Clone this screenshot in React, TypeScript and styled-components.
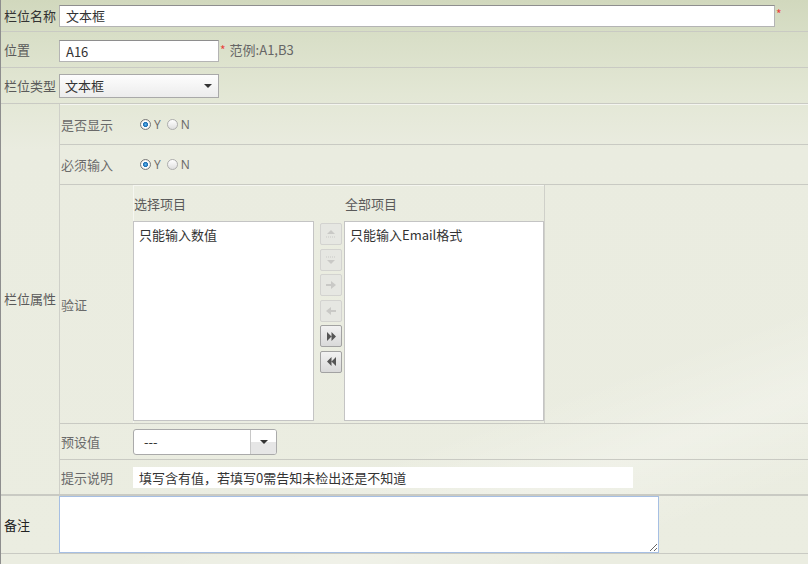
import React from 'react';
import styled, { createGlobalStyle } from 'styled-components';

const GlobalStyle = createGlobalStyle`
  html, body { margin: 0; padding: 0; }
  body {
    width: 808px;
    height: 564px;
    overflow: hidden;
    font-family: "Noto Sans CJK SC", "Open Sans", sans-serif;
    font-size: 13px;
    color: #444;
    background:
      linear-gradient(160deg, transparent 70%, rgba(255,255,255,0.25) 80%, transparent 90%),
      linear-gradient(180deg, #d1d8bd 0px, #d9dfc8 40px, #e3e7d5 95px, #eaece0 150px, #ebede1 100%);
  }
`;

const Form = styled.div`
  width: 808px;
  border-left: 1px solid #8e8e8e;
  box-sizing: border-box;
`;

const Row = styled.div<{ $h: number; $thick?: boolean }>`
  display: grid;
  grid-template-columns: 58px 1fr;
  min-height: ${(p) => p.$h}px;
  border-bottom: ${(p) => (p.$thick ? '2px' : '1px')} solid #c9cac3;
`;

const Label = styled.div<{ $tone?: string }>`
  display: flex;
  align-items: center;
  padding-left: 3px;
  color: ${(p) => p.$tone || '#5a5a5a'};
  white-space: nowrap;
  line-height: 16px;
`;

const Cell = styled.div`
  display: flex;
  align-items: center;
`;

const TextInput = styled.div<{ $w: number }>`
  width: ${(p) => p.$w}px;
  height: 22px;
  box-sizing: border-box;
  background: #fff;
  border: 1px solid #b4b4b4;
  border-top-color: #8e8e8e;
  padding-left: 6px;
  display: flex;
  align-items: center;
  color: #333;
`;

const Req = styled.span<{ $top: number }>`
  color: #e8453c;
  margin-left: 1px;
  font-size: 12px;
  line-height: 12px;
  align-self: flex-start;
  margin-top: ${(p) => p.$top}px;
`;

const Hint = styled.span`
  color: #666;
  margin-left: 4px;
`;

const Select = styled.div<{ $w: number }>`
  width: ${(p) => p.$w}px;
  height: 24px;
  box-sizing: border-box;
  border: 1px solid #a9a9a9;
  background: linear-gradient(#fdfdfd, #ececec);
  display: flex;
  align-items: center;
  justify-content: space-between;
  padding: 0 6px 0 5px;
  color: #333;
`;

const Caret = styled.span`
  width: 0;
  height: 0;
  border-left: 4px solid transparent;
  border-right: 4px solid transparent;
  border-top: 4px solid #333;
`;

const Inner = styled.div`
  border-left: 1px solid #cfd0c9;
  box-shadow: inset 0 1px 0 #f4f5ef;
`;

const SubRow = styled.div<{ $h: number; $last?: boolean }>`
  display: grid;
  grid-template-columns: 73px 1fr;
  min-height: ${(p) => p.$h}px;
  border-bottom: ${(p) => (p.$last ? 'none' : '1px solid #c9cac3')};
`;

const SubLabel = styled.div`
  display: flex;
  align-items: center;
  padding-left: 1px;
  color: #6a6a6a;
`;

const RadioGroup = styled.div`
  display: flex;
  align-items: center;
  padding-left: 7px;
  color: #666;
`;

const Radio = styled.span<{ $on?: boolean }>`
  width: 11px;
  height: 11px;
  box-sizing: border-box;
  border-radius: 50%;
  border: 1px solid ${(p) => (p.$on ? '#7a7a7a' : '#adadad')};
  background: ${(p) =>
    p.$on
      ? 'radial-gradient(circle, #5fb4ec 0, #1c6fb5 2.2px, #ffffff 2.9px, #e6e6e6 5px)'
      : 'linear-gradient(#ffffff, #dedede)'};
  margin-right: 3px;
`;

const RadioText = styled.span`
  margin-right: 6px;
  font-family: "Open Sans", sans-serif;
  font-size: 12px;
`;

const Picker = styled.div`
  display: grid;
  grid-template-columns: 181px 30px 200px;
  grid-template-rows: 36px 200px;
  width: 411px;
  border-right: 1px solid #cfd0c9;
  box-shadow: inset 1px 1px 0 #f5f6f0;
  padding-bottom: 2px;
`;

const PickerHead = styled.div`
  display: flex;
  align-items: center;
  padding-left: 1px;
  color: #5a5a5a;
`;

const ListBox = styled.div`
  border: 1px solid #c4c4c4;
  background: #fff;
  padding: 3px 5px;
  color: #333;
  line-height: 20px;
`;

const ButtonStack = styled.div`
  display: flex;
  flex-direction: column;
  gap: 3.6px;
  padding: 2px 0 0 6px;
`;

const MoveButton = styled.div<{ $on?: boolean }>`
  width: 22px;
  height: 22px;
  box-sizing: border-box;
  border: 1px solid ${(p) => (p.$on ? '#a2a2a2' : '#d3d3d0')};
  border-radius: 2px;
  background: ${(p) => (p.$on ? 'linear-gradient(#f2f2f2, #d9d9d9)' : '#e6e7e2')};
  display: flex;
  align-items: center;
  justify-content: center;
`;

const Combo = styled.div`
  width: 144px;
  height: 26px;
  box-sizing: border-box;
  border: 1px solid #aaa;
  border-radius: 3px;
  background: #fff;
  display: grid;
  grid-template-columns: 1fr 26px;
  overflow: hidden;
`;

const ComboText = styled.div`
  display: flex;
  align-items: center;
  padding-left: 10px;
  color: #333;
`;

const ComboArrow = styled.div`
  border-left: 1px solid #c8c8c8;
  background: linear-gradient(#ffffff 50%, #e6e6e6 50%);
  display: flex;
  align-items: center;
  justify-content: center;
`;

const Note = styled.div`
  width: 500px;
  height: 21px;
  background: #fff;
  display: flex;
  align-items: center;
  padding-left: 6px;
  box-sizing: border-box;
  color: #333;
`;

const Memo = styled.textarea`
  width: 600px;
  height: 57px;
  box-sizing: border-box;
  border: 1px solid #a6bfe3;
  background: #fff;
  margin: 0;
  resize: both;
  outline: none;
  font: inherit;
`;

const Tail = styled.div`
  height: 10px;
`;

const Icon: React.FC<{ kind: string }> = ({ kind }) => {
  const light = '#c9c9c6';
  const dark = '#555';
  switch (kind) {
    case 'up':
      return (
        <svg width="14" height="12" viewBox="0 0 14 12">
          <path d="M3 6 L7 2 L11 6 Z" fill={light} />
          <path d="M2 9 H12" stroke={light} strokeDasharray="1 1" />
        </svg>
      );
    case 'down':
      return (
        <svg width="14" height="12" viewBox="0 0 14 12">
          <path d="M2 3 H12" stroke={light} strokeDasharray="1 1" />
          <path d="M3 6 L7 10 L11 6 Z" fill={light} />
        </svg>
      );
    case 'right':
      return (
        <svg width="12" height="10" viewBox="0 0 12 10">
          <path d="M1 4 H6 V1 L11 5 L6 9 V6 H1 Z" fill={light} />
        </svg>
      );
    case 'left':
      return (
        <svg width="12" height="10" viewBox="0 0 12 10">
          <path d="M11 4 H6 V1 L1 5 L6 9 V6 H11 Z" fill={light} />
        </svg>
      );
    case 'all-right':
      return (
        <svg width="11" height="9" viewBox="0 0 11 9">
          <path d="M1 0 L5.5 4.5 L1 9 Z M5.5 0 L10 4.5 L5.5 9 Z" fill={dark} />
        </svg>
      );
    default:
      return (
        <svg width="11" height="9" viewBox="0 0 11 9">
          <path d="M5.5 0 L1 4.5 L5.5 9 Z M10 0 L5.5 4.5 L10 9 Z" fill={dark} />
        </svg>
      );
  }
};

const buttons = [
  { kind: 'up', on: false },
  { kind: 'down', on: false },
  { kind: 'right', on: false },
  { kind: 'left', on: false },
  { kind: 'all-right', on: true },
  { kind: 'all-left', on: true },
];

const YesNo: React.FC = () => (
  <RadioGroup>
    <Radio $on />
    <RadioText>Y</RadioText>
    <Radio />
    <RadioText>N</RadioText>
  </RadioGroup>
);

const App: React.FC = () => (
  <>
    <GlobalStyle />
    <Form>
      <Row $h={31}>
        <Label $tone="#333">栏位名称</Label>
        <Cell>
          <TextInput $w={716}>文本框</TextInput>
          <Req $top={8}>*</Req>
        </Cell>
      </Row>
      <Row $h={35}>
        <Label>位置</Label>
        <Cell>
          <TextInput $w={160} style={{ marginTop: 3 }}>A16</TextInput>
          <Req $top={12}>*</Req>
          <Hint>范例:A1,B3</Hint>
        </Cell>
      </Row>
      <Row $h={35}>
        <Label>栏位类型</Label>
        <Cell>
          <Select $w={160}>
            文本框
            <Caret />
          </Select>
        </Cell>
      </Row>
      <Row $h={390} $thick>
        <Label>栏位属性</Label>
        <Inner>
          <SubRow $h={40}>
            <SubLabel>是否显示</SubLabel>
            <YesNo />
          </SubRow>
          <SubRow $h={39}>
            <SubLabel>必须输入</SubLabel>
            <YesNo />
          </SubRow>
          <SubRow $h={238}>
            <SubLabel>验证</SubLabel>
            <Picker>
              <PickerHead>选择项目</PickerHead>
              <span />
              <PickerHead>全部项目</PickerHead>
              <ListBox>只能输入数值</ListBox>
              <ButtonStack>
                {buttons.map((b) => (
                  <MoveButton key={b.kind} $on={b.on}>
                    <Icon kind={b.kind} />
                  </MoveButton>
                ))}
              </ButtonStack>
              <ListBox>只能输入Email格式</ListBox>
            </Picker>
          </SubRow>
          <SubRow $h={35}>
            <SubLabel>预设值</SubLabel>
            <Cell>
              <Combo>
                <ComboText>---</ComboText>
                <ComboArrow>
                  <Caret />
                </ComboArrow>
              </Combo>
            </Cell>
          </SubRow>
          <SubRow $h={34} $last>
            <SubLabel>提示说明</SubLabel>
            <Cell>
              <Note>填写含有值，若填写0需告知未检出还是不知道</Note>
            </Cell>
          </SubRow>
        </Inner>
      </Row>
      <Row $h={57}>
        <Label $tone="#222">备注</Label>
        <Memo />
      </Row>
      <Tail />
    </Form>
  </>
);

export default App;
